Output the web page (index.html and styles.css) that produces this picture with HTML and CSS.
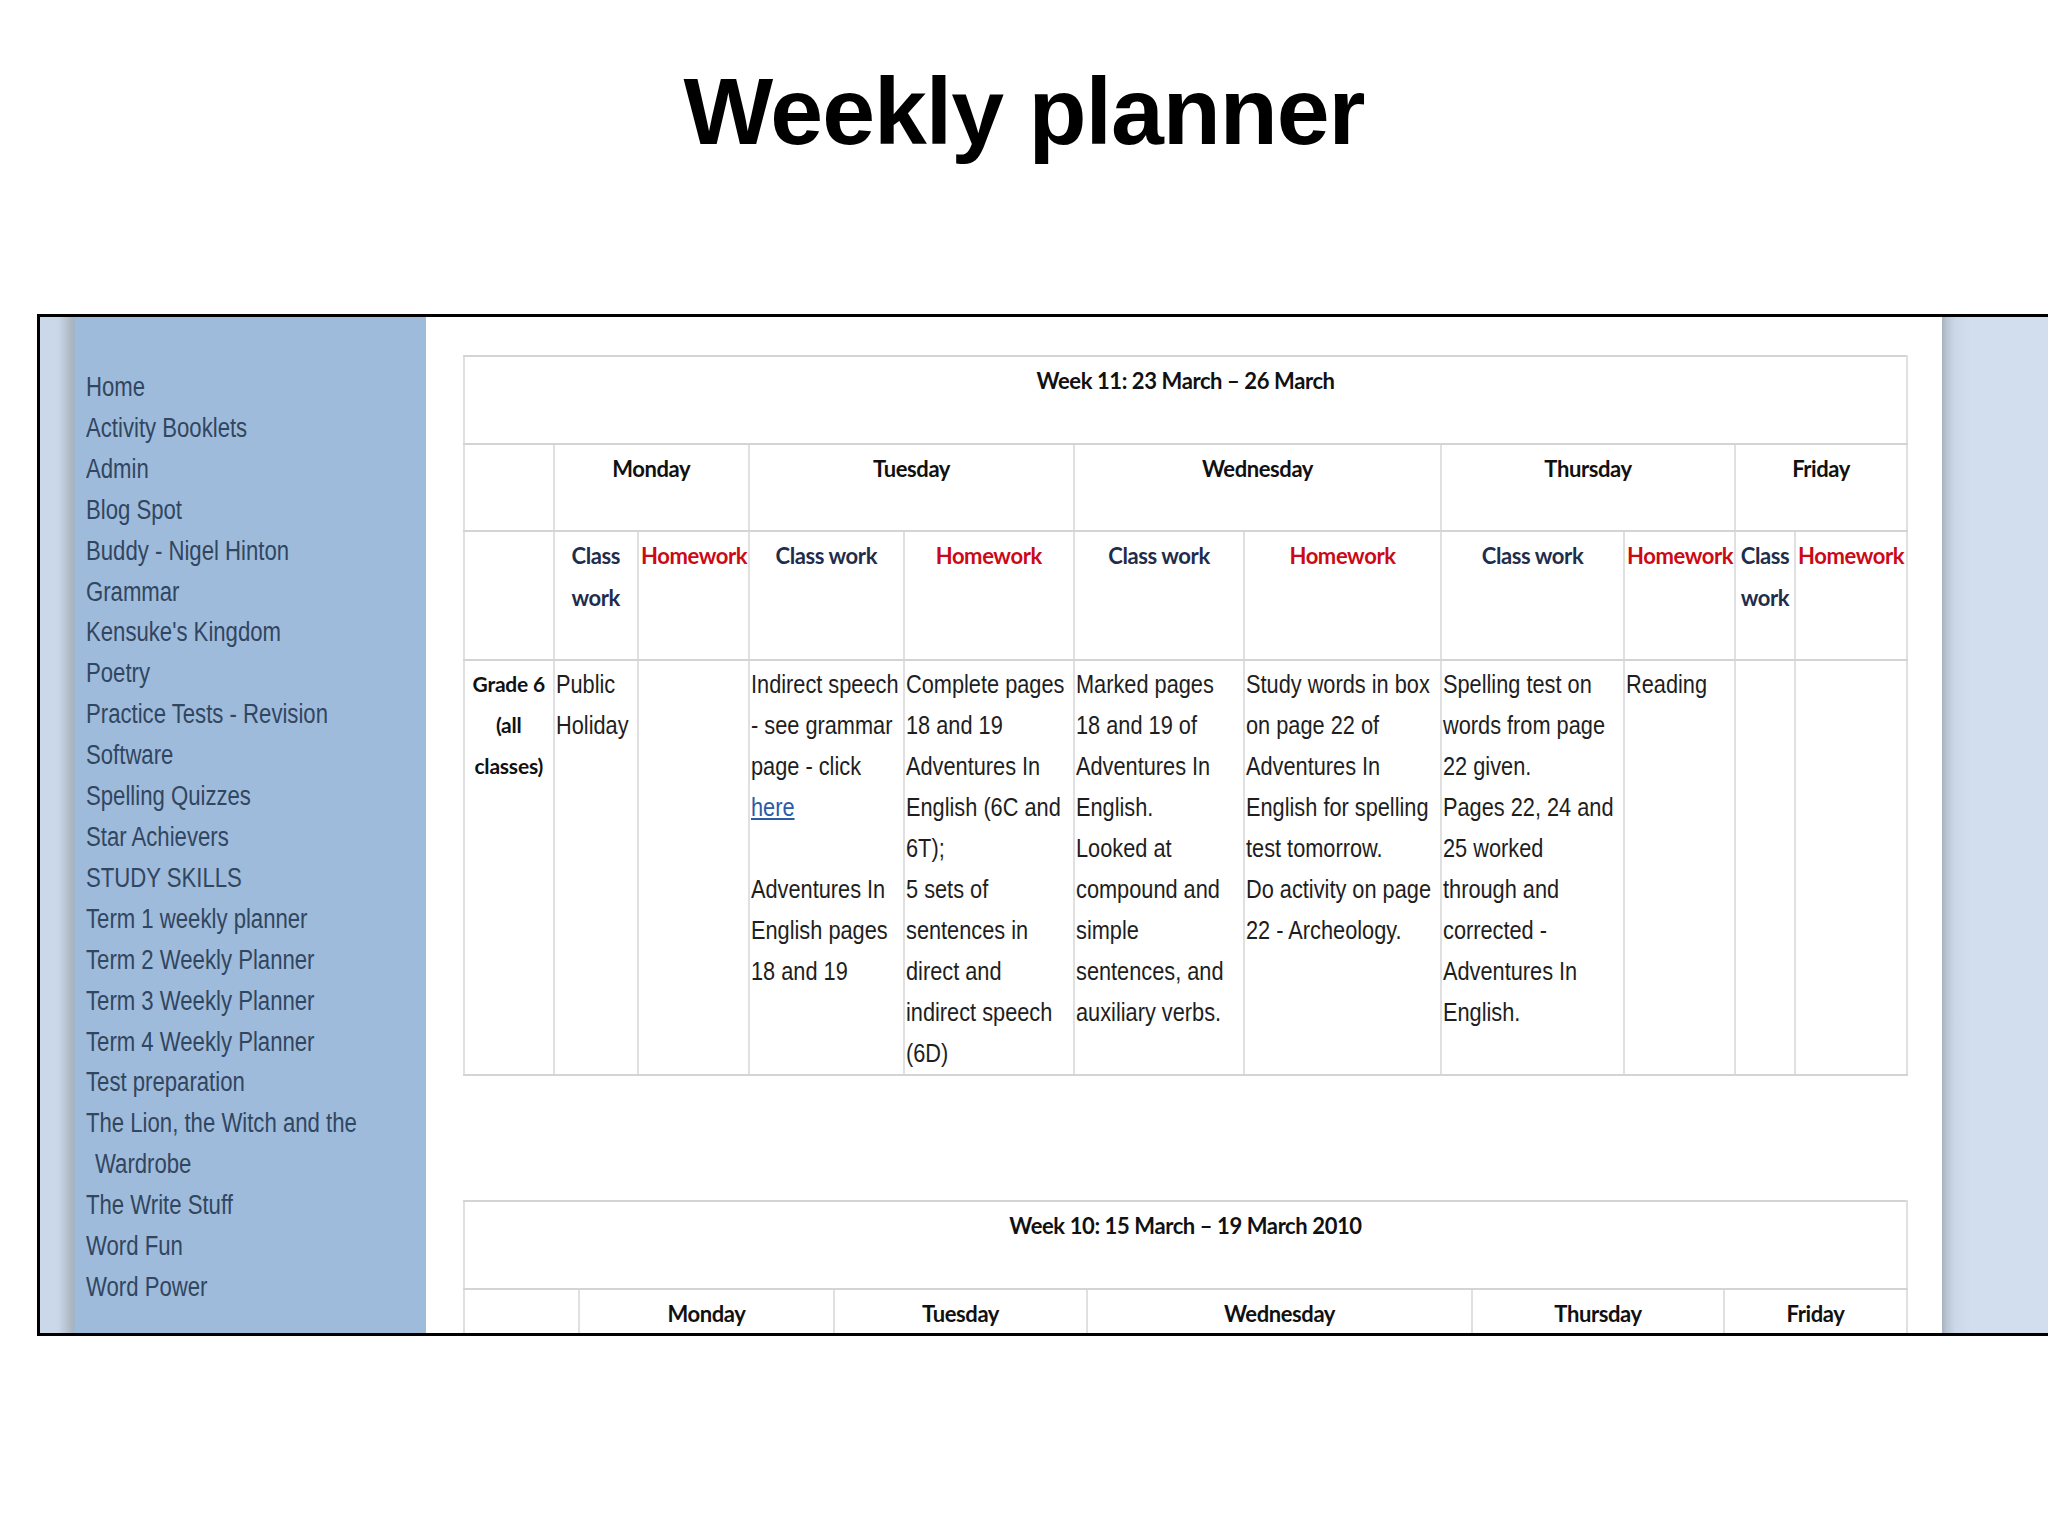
FILE: index.html
```html
<!DOCTYPE html>
<html lang="en">
<head>
<meta charset="utf-8">
<title>Weekly planner</title>
<link rel="stylesheet" href="styles.css">
</head>
<body>
<h1 class="title">Weekly planner</h1>
<div class="frame">
  <div class="edge-left"></div>
  <nav class="sidebar">
    <ul class="nav">
      <li>Home</li>
      <li>Activity Booklets</li>
      <li>Admin</li>
      <li>Blog Spot</li>
      <li>Buddy - Nigel Hinton</li>
      <li>Grammar</li>
      <li>Kensuke's Kingdom</li>
      <li>Poetry</li>
      <li>Practice Tests - Revision</li>
      <li>Software</li>
      <li>Spelling Quizzes</li>
      <li>Star Achievers</li>
      <li>STUDY SKILLS</li>
      <li>Term 1 weekly planner</li>
      <li>Term 2 Weekly Planner</li>
      <li>Term 3 Weekly Planner</li>
      <li>Term 4 Weekly Planner</li>
      <li>Test preparation</li>
      <li>The Lion, the Witch and the Wardrobe</li>
      <li>The Write Stuff</li>
      <li>Word Fun</li>
      <li>Word Power</li>
    </ul>
  </nav>
  <main class="content">
    <table class="plan wk11">
      <colgroup>
        <col class="a1"><col class="a2"><col class="a3"><col class="a4"><col class="a5"><col class="a6"><col class="a7"><col class="a8"><col class="a9"><col class="a10"><col class="a11">
      </colgroup>
      <tr class="r-title"><th colspan="11">Week 11: 23 March – 26 March</th></tr>
      <tr class="r-days">
        <th></th><th colspan="2">Monday</th><th colspan="2">Tuesday</th><th colspan="2">Wednesday</th><th colspan="2">Thursday</th><th colspan="2">Friday</th>
      </tr>
      <tr class="r-sub">
        <th></th>
        <th class="cw">Class work</th><th class="hw">Homework</th>
        <th class="cw">Class work</th><th class="hw">Homework</th>
        <th class="cw">Class work</th><th class="hw">Homework</th>
        <th class="cw">Class work</th><th class="hw">Homework</th>
        <th class="cw">Class work</th><th class="hw">Homework</th>
      </tr>
      <tr class="r-data">
        <th class="grade">Grade 6 (all classes)</th>
        <td><div class="txt">Public<br>Holiday</div></td>
        <td></td>
        <td><div class="txt">Indirect speech<br>- see grammar<br>page - click<br><a class="link" href="#">here</a><br><br>Adventures In<br>English pages<br>18 and 19</div></td>
        <td><div class="txt">Complete pages<br>18 and 19<br>Adventures In<br>English (6C and<br>6T);<br>5 sets of<br>sentences in<br>direct and<br>indirect speech<br>(6D)</div></td>
        <td><div class="txt">Marked pages<br>18 and 19 of<br>Adventures In<br>English.<br>Looked at<br>compound and<br>simple<br>sentences, and<br>auxiliary verbs.</div></td>
        <td><div class="txt">Study words in box<br>on page 22 of<br>Adventures In<br>English for spelling<br>test tomorrow.<br>Do activity on page<br>22 - Archeology.</div></td>
        <td><div class="txt">Spelling test on<br>words from page<br>22 given.<br>Pages 22, 24 and<br>25 worked<br>through and<br>corrected -<br>Adventures In<br>English.</div></td>
        <td><div class="txt">Reading</div></td>
        <td></td>
        <td></td>
      </tr>
    </table>

    <table class="plan wk10">
      <colgroup>
        <col class="b1"><col class="b2"><col class="b3"><col class="b4"><col class="b5"><col class="b6">
      </colgroup>
      <tr class="r-title"><th colspan="6">Week 10: 15 March – 19 March 2010</th></tr>
      <tr class="r-days">
        <th></th><th>Monday</th><th>Tuesday</th><th>Wednesday</th><th>Thursday</th><th>Friday</th>
      </tr>
    </table>
  </main>
  <div class="edge-right"></div>
</div>
</body>
</html>
```
FILE: styles.css
```css
* { box-sizing: border-box; }

html, body {
  margin: 0;
  padding: 0;
}

body {
  width: 2048px;
  height: 1536px;
  overflow: hidden;
  background: #ffffff;
  font-family: "Liberation Sans", Arial, sans-serif;
  color: #000;
}

.title {
  margin: 64px 0 0;
  height: 95px;
  font-size: 95px;
  line-height: 1;
  font-weight: bold;
  letter-spacing: -1px;
  text-align: center;
  color: #000;
}

.frame {
  display: flex;
  margin: 155px 0 0 37px;
  width: 2100px;
  height: 1022px;
  border: 3px solid #000;
  border-right: none;
}

.edge-left {
  width: 35px;
  flex: none;
  background: linear-gradient(to right, #cad8ea 0, #c9d7e9 18px, #bcc7d4 25px, #aab5c2 32px, #a3b5ca 35px);
}

.sidebar {
  width: 351px;
  flex: none;
  background: #9fbbdb;
  padding: 50px 0 0 11px;
  overflow: hidden;
}

/* the menu type is set condensed, as in the original site */
.nav {
  list-style: none;
  margin: 0;
  padding: 0;
  width: 415px;
  transform: scaleX(0.82);
  transform-origin: 0 0;
  font-family: "Liberation Sans", Arial, sans-serif;
  font-size: 27px;
  line-height: 40.9px;
  color: #31465f;
}

.nav li {
  padding-left: 11px;
  text-indent: -11px;
}

.content {
  width: 1516px;
  flex: none;
  background: #ffffff;
  padding: 38px 0 0 37px;
  overflow: hidden;
}

.edge-right {
  flex: 1;
  background: linear-gradient(to right, #a6b2c0 0, #bac6d4 5px, #cbd8e8 13px, #d2deed 30px);
}

/* tables */
.plan {
  border-collapse: collapse;
  table-layout: fixed;
  width: 1443px;
  font-family: Lato, "Liberation Sans", sans-serif;
}

.plan th,
.plan td {
  border-left: 2px solid #e0e0e0;
  border-right: 2px solid #e0e0e0;
  border-top: 2px solid #d4d4d4;
  border-bottom: 2px solid #d4d4d4;
  vertical-align: top;
  padding: 0;
}

.plan th {
  font-weight: bold;
  font-size: 22px;
  letter-spacing: -0.4px;
  line-height: 42px;
  color: #111;
  text-align: center;
  padding: 3px 2px 0;
}

.wk11 { margin-bottom: 124px; }

.r-title { height: 88px; }
.r-days { height: 87px; }
.r-sub { height: 129px; }
.r-data { height: 415px; }

.plan .cw { color: #1f2d4c; }
.plan .hw { color: #cc0a16; }

.plan .grade {
  font-size: 21px;
  letter-spacing: -0.2px;
  line-height: 41px;
  padding-top: 2px;
}

.plan td {
  font-family: "Liberation Sans", Arial, sans-serif;
  font-size: 25px;
  line-height: 41px;
  color: #1e1e1e;
  white-space: nowrap;
  padding: 3px 1px 0;
}

/* condensed body type */
.txt {
  transform: scaleX(0.87);
  transform-origin: 0 0;
}

.link {
  color: #2a5aa8;
  text-decoration: underline;
}

.a1 { width: 89.5px; }
.a2 { width: 84.5px; }
.a3 { width: 111px; }
.a4 { width: 154.5px; }
.a5 { width: 170.5px; }
.a6 { width: 170px; }
.a7 { width: 197px; }
.a8 { width: 183px; }
.a9 { width: 111px; }
.a10 { width: 60px; }
.a11 { width: 112px; }

.b1 { width: 115px; }
.b2 { width: 255px; }
.b3 { width: 253px; }
.b4 { width: 385px; }
.b5 { width: 252px; }
.b6 { width: 183px; }
```
